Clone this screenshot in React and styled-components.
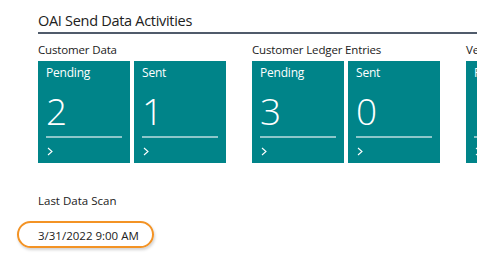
import React from "react";
import styled, { createGlobalStyle } from "styled-components";

const GlobalStyle = createGlobalStyle`
  body {
    margin: 0;
    background: #ffffff;
    font-family: "Open Sans", "Noto Sans", sans-serif;
  }
`;

const Page = styled.div`
  width: 477px;
  height: 259px;
  overflow: hidden;
  padding-left: 38px;
  box-sizing: border-box;
`;

const Header = styled.div`
  padding-top: 10px;
  height: 22px;
  border-bottom: 2px solid #505b6b;
  font-size: 14.5px;
  letter-spacing: -0.3px;
  line-height: 22px;
  color: #212121;
  white-space: nowrap;
`;

const Groups = styled.div`
  display: flex;
  gap: 26px;
  margin-top: 8px;
`;

const Group = styled.div`
  display: flex;
  flex-direction: column;
  flex-shrink: 0;
`;

const GroupLabel = styled.div`
  font-size: 11.5px;
  letter-spacing: -0.15px;
  line-height: 15px;
  height: 19px;
  color: #212121;
  white-space: nowrap;
`;

const Tiles = styled.div`
  display: flex;
  gap: 4px;
`;

const Tile = styled.div`
  width: 92px;
  height: 102px;
  background: #008489;
  color: #ffffff;
  padding: 3px 8px 0 8px;
  box-sizing: border-box;
  display: flex;
  flex-direction: column;
`;

const TileCaption = styled.div`
  font-size: 12px;
  letter-spacing: -0.2px;
  line-height: 18px;
  white-space: nowrap;
`;

const TileValue = styled.div`
  font-size: 37px;
  font-weight: 300;
  line-height: 40px;
  margin-top: 9px;
  height: 44px;
`;

const TileRule = styled.div`
  height: 2px;
  background: rgba(255, 255, 255, 0.55);
  margin-top: 1px;
`;

const Chevron = styled.svg`
  margin-top: 9px;
  margin-left: 1px;
`;

const Section = styled.div`
  margin-top: 30px;
`;

const SectionLabel = styled.div`
  font-size: 11.5px;
  line-height: 16px;
  color: #212121;
`;

const DateValue = styled.div`
  position: relative;
  margin-top: 19px;
  font-size: 11.5px;
  line-height: 16px;
  color: #212121;
  width: max-content;
`;

const Highlight = styled.div`
  position: absolute;
  left: -21px;
  top: -7px;
  width: 133px;
  height: 23px;
  border: 2px solid #f39325;
  border-radius: 14px;
  box-shadow: 1px 2px 3px rgba(0, 0, 0, 0.18);
  pointer-events: none;
`;

const groups = [
  { label: "Customer Data", tiles: [["Pending", 2], ["Sent", 1]] },
  { label: "Customer Ledger Entries", tiles: [["Pending", 3], ["Sent", 0]] },
  { label: "Vendor Data", tiles: [["Pending", 1], ["Sent", 1]] },
];

function Cue({ caption, value }) {
  return (
    <Tile>
      <TileCaption>{caption}</TileCaption>
      <TileValue>{value}</TileValue>
      <TileRule />
      <Chevron width="6" height="9" viewBox="0 0 6 9">
        <path d="M1 1 L5 4.5 L1 8" fill="none" stroke="#ffffff" strokeWidth="1.1" />
      </Chevron>
    </Tile>
  );
}

export default function App() {
  return (
    <Page>
      <GlobalStyle />
      <Header>OAI Send Data Activities</Header>
      <Groups>
        {groups.map((g) => (
          <Group key={g.label}>
            <GroupLabel>{g.label}</GroupLabel>
            <Tiles>
              {g.tiles.map(([c, v]) => (
                <Cue key={c} caption={c} value={v} />
              ))}
            </Tiles>
          </Group>
        ))}
      </Groups>
      <Section>
        <SectionLabel>Last Data Scan</SectionLabel>
        <DateValue>
          3/31/2022 9:00 AM
          <Highlight />
        </DateValue>
      </Section>
    </Page>
  );
}
